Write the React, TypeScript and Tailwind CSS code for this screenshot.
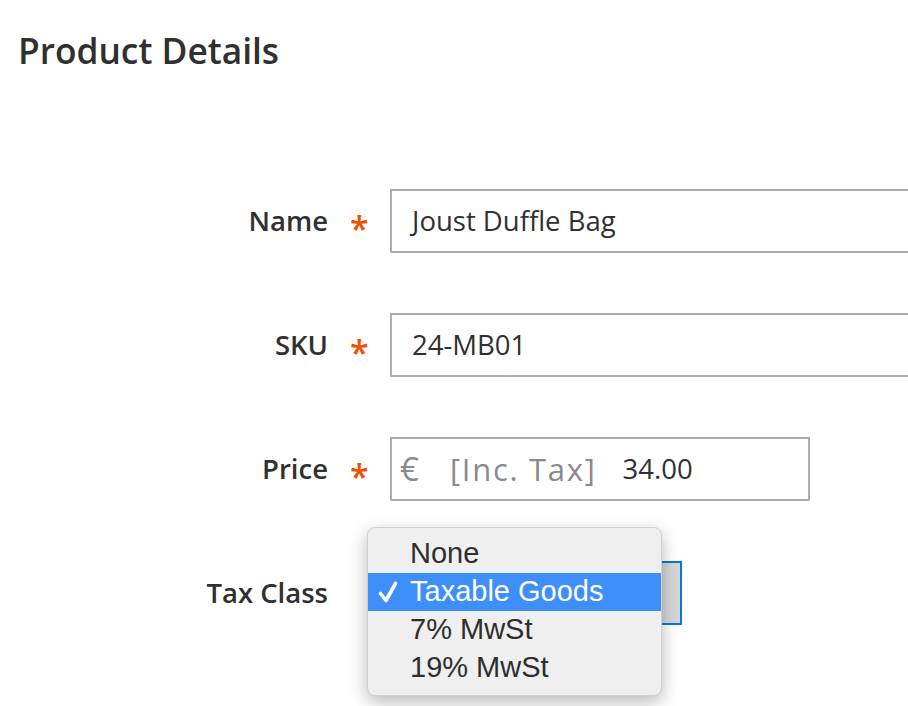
import React from "react";

const Star = () => (
  <div className="shrink-0 w-[62px] h-full flex items-center pl-[22px]">
    <span className="text-[#eb5202] text-[34px] leading-none font-semibold translate-y-[7px]">*</span>
  </div>
);

const Label = ({ children }: { children: React.ReactNode }) => (
  <div className="shrink-0 w-[328px] text-right text-[27.5px] leading-[34px] font-semibold text-[#303030]">{children}</div>
);

export default function App() {
  return (
    <div
      className="w-[908px] h-[706px] overflow-hidden bg-white text-[#303030]"
      style={{ fontFamily: '"Open Sans", "Noto Sans", sans-serif' }}
    >
      <h1 className="pl-[18px] pt-[32px] text-[35.3px] leading-[36px] font-semibold text-[#303030]">Product Details</h1>
      <div className="mt-[121px] flex flex-col gap-[60px]">
        <div className="flex items-center h-[64px]">
          <Label>Name</Label>
          <Star />
          <div className="shrink-0 w-[560px] h-[64px] border-2 border-[#adadad] pl-[20px] flex items-center text-[27.5px]">
            Joust Duffle Bag
          </div>
        </div>
        <div className="flex items-center h-[64px]">
          <Label>SKU</Label>
          <Star />
          <div className="shrink-0 w-[560px] h-[64px] border-2 border-[#adadad] pl-[20px] flex items-center text-[27.5px]">
            24-MB01
          </div>
        </div>
        <div className="flex items-center h-[64px]">
          <Label>Price</Label>
          <Star />
          <div className="shrink-0 w-[420px] h-[64px] border-2 border-[#adadad] pl-[8px] flex items-center">
            <span className="text-[33px] text-[#8a8a8a] w-[50px]">€</span>
            <span className="text-[31px] text-[#8a8a8a] tracking-[1.7px]">[Inc. Tax]</span>
            <span className="text-[27.5px] text-[#303030] ml-[26px]">34.00</span>
          </div>
        </div>
        <div className="flex items-center h-[64px]">
          <Label>Tax Class</Label>
          <div className="shrink-0 w-[62px]" />
          <div className="relative shrink-0 w-[292px] h-[64px] border-2 border-[#007bdb] flex">
            <div className="flex-1 bg-white" />
            <div className="w-[40px] bg-[#d6d6d6]" />
            <div
              className="absolute left-[-25px] top-[-36px] w-[295px] h-[169px] rounded-[8px] bg-[#efefef] border border-[#cfcfcf] shadow-[0_6px_18px_rgba(0,0,0,0.28)] pt-[7px]"
              style={{ fontFamily: '"Liberation Sans", Arial, sans-serif' }}
            >
              <div className="h-[38px] flex items-center pl-[42px] text-[29px] text-[#2e2e2e]">None</div>
              <div className="h-[38px] flex items-center bg-[#3f8ffa] text-white text-[29px] relative pl-[42px]">
                <svg className="absolute left-[10px] top-[8px]" width="20" height="22" viewBox="0 0 20 22">
                  <path d="M2.5 12.5 L8 19.5 L17.5 2.5" fill="none" stroke="white" strokeWidth="3.6" strokeLinecap="round" strokeLinejoin="round" />
                </svg>
                Taxable Goods
              </div>
              <div className="h-[38px] flex items-center pl-[42px] text-[29px] text-[#2e2e2e]">7% MwSt</div>
              <div className="h-[38px] flex items-center pl-[42px] text-[29px] text-[#2e2e2e]">19% MwSt</div>
            </div>
          </div>
        </div>
      </div>
    </div>
  );
}
